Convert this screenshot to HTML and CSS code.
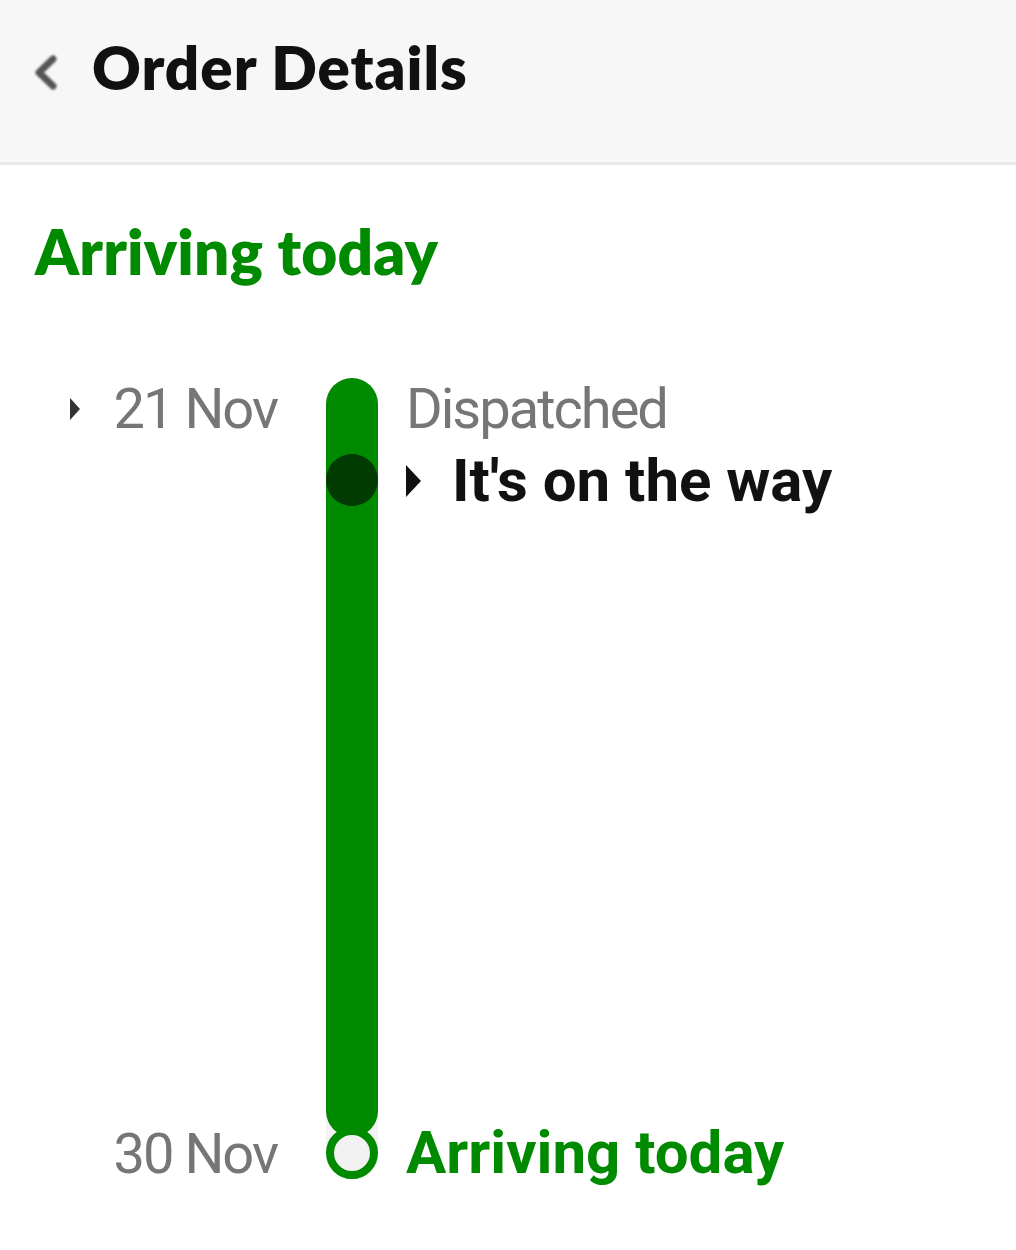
FILE: index.html
```html
<!DOCTYPE html>
<html lang="en">
<head>
  <meta charset="UTF-8" />
  <meta name="viewport" content="width=device-width, initial-scale=1.0"/>
  <title>Order Details</title>
  <link rel="stylesheet" href="styles.css">
</head>
<body>
  <header class="app-header">
    <button class="back-button" aria-label="Back">
      <svg width="28" height="40" viewBox="0 0 28 40">
        <polyline points="23,7 9,20.5 23,34" fill="none" stroke="#555" stroke-width="7" stroke-linecap="round" stroke-linejoin="round"/>
      </svg>
    </button>
    <h1>Order Details</h1>
  </header>

  <main class="content">
    <h2 class="status-title">Arriving today</h2>

    <section class="timeline">
      <div class="dates">
        <div class="date-row">
          <span class="caret caret-small"></span>
          <span class="date">21 Nov</span>
        </div>
        <div class="date-row last">
          <span class="date">30 Nov</span>
        </div>
      </div>

      <div class="track">
        <div class="bar">
          <span class="current-dot"></span>
        </div>
        <div class="end-node">
          <span class="end-ring"></span>
        </div>
      </div>

      <div class="events">
        <div class="event muted">Dispatched</div>
        <div class="event current">
          <span class="caret caret-large"></span>
          <span>It's on the way</span>
        </div>
        <div class="event arriving">Arriving today</div>
      </div>
    </section>
  </main>
</body>
</html>
```

FILE: styles.css
```css
* {
  margin: 0;
  padding: 0;
  box-sizing: border-box;
}

html,
body {
  min-height: 100%;
}

body {
  background: #fff;
  font-family: 'Roboto', sans-serif;
  color: #111;
}

.app-header {
  display: flex;
  align-items: center;
  height: 165px;
  padding: 0 0 28px 30px;
  background: #f7f7f7;
  border-bottom: 3px solid #e9e9e9;
}

.back-button {
  display: flex;
  width: 32px;
  height: 40px;
  margin-top: 9px;
  border: none;
  background: none;
  filter: blur(0.8px);
}

.app-header h1 {
  margin-left: 30px;
  font-family: 'Lato', sans-serif;
  font-size: 60px;
  font-weight: 800;
  letter-spacing: 1px;
  color: #111;
  line-height: 1;
}

.content {
  padding: 55px 0 60px 35px;
}

.status-title {
  font-family: 'Lato', sans-serif;
  font-size: 62px;
  font-weight: 800;
  letter-spacing: 0.2px;
  color: #008a00;
  line-height: 1;
}

.timeline {
  display: flex;
  margin-top: 96px;
}

.dates {
  display: flex;
  flex-direction: column;
  justify-content: space-between;
  align-items: flex-end;
  width: 242px;
  padding-top: 3px;
}

.date-row {
  display: flex;
  align-items: center;
}

.date-row.last {
  margin-bottom: 1px;
}

.date {
  font-size: 56px;
  letter-spacing: -2px;
  color: #767676;
  line-height: 1;
}

.caret {
  display: inline-block;
  width: 0;
  height: 0;
  border-style: solid;
  border-color: transparent;
}

.caret-small {
  margin-right: 34px;
  border-width: 11px 0 11px 10px;
  border-left-color: #333;
}

.caret-large {
  margin-right: 31px;
  border-width: 16px 0 16px 15px;
  border-left-color: #111;
}

.track {
  display: flex;
  flex-direction: column;
  width: 52px;
  margin: 0 0 4px 49px;
}

.bar {
  position: relative;
  height: 759px;
  background: #008a00;
  border-radius: 26px;
  z-index: 1;
}

.current-dot {
  position: absolute;
  top: 76px;
  left: 0;
  width: 52px;
  height: 52px;
  border-radius: 50%;
  background: #033c03;
}

.end-node {
  position: relative;
  height: 52px;
  margin-top: -10px;
  background: linear-gradient(#f2f2f2 50%, transparent 50%);
}

.end-node::before {
  content: '';
  position: absolute;
  top: -20px;
  left: 0;
  right: 0;
  height: 20px;
  background: #f2f2f2;
}

.end-ring {
  position: relative;
  display: block;
  width: 52px;
  height: 52px;
  border: 8px solid #008a00;
  border-radius: 50%;
  background: #f2f2f2;
  z-index: 2;
}

.events {
  display: flex;
  flex-direction: column;
  margin-left: 28px;
  padding-top: 3px;
}

.event {
  line-height: 1;
}

.muted {
  font-size: 56px;
  letter-spacing: -2px;
  color: #767676;
}

.current {
  display: flex;
  align-items: center;
  margin-top: 14px;
  font-size: 60px;
  font-weight: 700;
  color: #111;
}

.arriving {
  margin-top: auto;
  font-size: 60px;
  font-weight: 700;
  color: #008a00;
}
```
